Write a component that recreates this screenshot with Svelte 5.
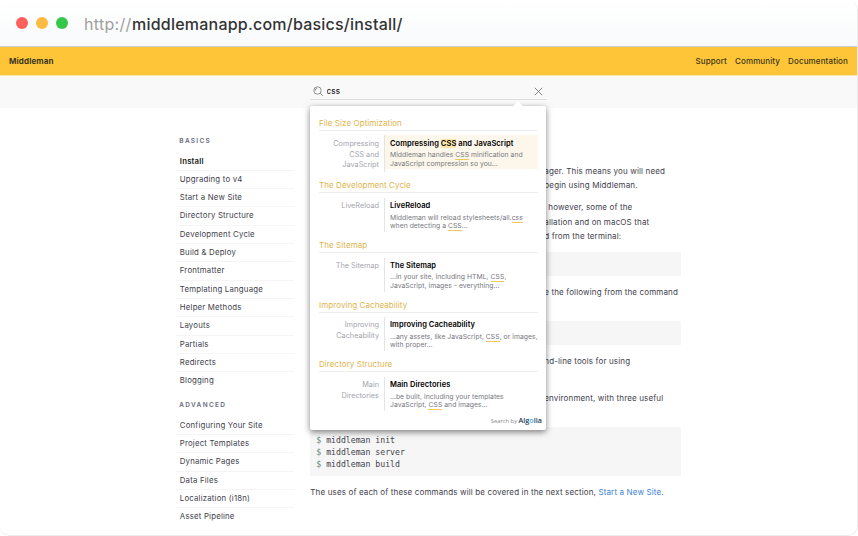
<script>
  const basics = ['Install', 'Upgrading to v4', 'Start a New Site', 'Directory Structure', 'Development Cycle', 'Build & Deploy', 'Frontmatter', 'Templating Language', 'Helper Methods', 'Layouts', 'Partials', 'Redirects', 'Blogging'];
  const advanced = ['Configuring Your Site', 'Project Templates', 'Dynamic Pages', 'Data Files', 'Localization (i18n)', 'Asset Pipeline'];
  const groups = [
    { name: 'File Size Optimization', side: ['Compressing', 'CSS and', 'JavaScript'], title: ['Compressing ', 'CSS', ' and JavaScript'], lines: [['Middleman handles ', 'CSS', ' minification and'], ['JavaScript compression so you…']], active: true },
    { name: 'The Development Cycle', side: ['LiveReload'], title: ['LiveReload'], lines: [['Middleman will reload stylesheets/all.', 'css'], ['when detecting a ', 'CSS', '…']] },
    { name: 'The Sitemap', side: ['The Sitemap'], title: ['The Sitemap'], lines: [['…in your site, including HTML, ', 'CSS', ','], ['JavaScript, images - everything…']] },
    { name: 'Improving Cacheability', side: ['Improving', 'Cacheability'], title: ['Improving Cacheability'], lines: [['…any assets, like JavaScript, ', 'CSS', ', or images,'], ['with proper…']] },
    { name: 'Directory Structure', side: ['Main', 'Directories'], title: ['Main Directories'], lines: [['…be built, including your templates'], ['JavaScript, ', 'CSS', ' and images…']] }
  ];
  let query = $state('css');
</script>

<div class="window">
  <header class="chrome">
    <i class="dot red"></i><i class="dot amber"></i><i class="dot green"></i>
    <div class="url"><span class="scheme">http://</span><span class="host">middlemanapp.com/basics/install/</span></div>
  </header>
  <nav class="topbar">
    <b>Middleman</b>
    <div class="links"><span>Support</span><span>Community</span><span>Documentation</span></div>
  </nav>
  <div class="searchbar">
    <div class="search">
      <svg width="11" height="11" viewBox="0 0 11 11" fill="none" stroke="#777" stroke-width=".8"><circle cx="4.5" cy="4.5" r="3.7" /><path d="M7.2 7.2 9.9 9.9M2.2 4.7A2.4 2.4 0 0 1 4.3 2.2" /></svg>
      <input bind:value={query} aria-label="Search" />
      <svg class="clear" width="9" height="9" viewBox="0 0 9 9" fill="none" stroke="#666" stroke-width=".8"><path d="M.8 .8 8.2 8.2M8.2 .8 .8 8.2" /></svg>
      <div class="popup">
        {#each groups as g}
          <section>
            <h3>{g.name}</h3>
            <div class="result">
              <div class="side">{#each g.side as s}<div>{s}</div>{/each}</div>
              <div class="hit" class:active={g.active}>
                <h4>{#each g.title as t, i}{#if i % 2}<mark>{t}</mark>{:else}{t}{/if}{/each}</h4>
                {#each g.lines as line}
                  <p>{#each line as t, i}{#if i % 2}<u>{t}</u>{:else}{t}{/if}{/each}</p>
                {/each}
              </div>
            </div>
          </section>
        {/each}
        <footer>Search by <strong>Alg<em>o</em>lia</strong></footer>
      </div>
    </div>
  </div>
  <div class="body">
    <aside>
      <h2>BASICS</h2>
      <ul>{#each basics as item, i}<li class:current={i === 0}>{item}</li>{/each}</ul>
      <h2 class="second">ADVANCED</h2>
      <ul>{#each advanced as item}<li>{item}</li>{/each}</ul>
    </aside>
    <main>
      <div class="para first"><div>ager. This means you will need</div><div>begin using Middleman.</div></div>
      <div class="para three"><div class="in">however, some of the</div><div>allation and on macOS that</div><div>d from the terminal:</div></div>
      <div class="box"></div>
      <div class="para cmd"><div>e the following from the command</div></div>
      <div class="box low"></div>
      <div class="para tools"><div>nd-line tools for using</div></div>
      <div class="para env"><div>environment, with three useful</div></div>
      <pre><span>$</span> middleman init
<span>$</span> middleman server
<span>$</span> middleman build</pre>
      <p class="last">The uses of each of these commands will be covered in the next section, <a href="#new">Start a New Site</a>.</p>
    </main>
  </div>
</div>

<style>
  :global(body) { background: #fff; }
  * { box-sizing: border-box; }
  h2, h3, h4, p, ul, pre { margin: 0; padding: 0; }
  .window { width: 858px; height: 536px; overflow: hidden; background: #fff; border: solid #ececec; border-width: 0 1px 1px 0; border-radius: 10px; font-family: Inter, "Liberation Sans", sans-serif; color: #42424c; display: flex; flex-direction: column; }
  .chrome { height: 47px; flex: none; margin-right: -1px; display: flex; align-items: center; border-bottom: 1px solid #c9ced3; background: linear-gradient(#fff, #f8fafb); padding: 0 0 0 15.5px; }
  .dot { width: 12.5px; height: 12.5px; border-radius: 50%; margin-right: 7.7px; }
  .red { background: #ff605c; } .amber { background: #ffba41; } .green { background: #34c749; }
  .url { font-size: 16px; margin-left: 8px; white-space: nowrap; padding-top: 1px; display: flex; }
  .scheme { color: #a0a0a0; width: 48px; letter-spacing: .3px; }
  .host { color: #333; font-weight: 500; letter-spacing: .22px; }
  .topbar { height: 28.5px; flex: none; background: #fdc537; border-bottom: 1px solid #fde6a8; display: flex; justify-content: space-between; align-items: center; padding: 0 9px; font-size: 8px; letter-spacing: .12px; color: #3c3520; }
  .links { display: flex; gap: 8px; font-weight: 500; }
  .searchbar { height: 32.5px; flex: none; background: #f9f9f9; padding-left: 310px; }
  .search { position: relative; width: 237px; height: 24px; border-bottom: 1px solid #dcdcdc; display: flex; align-items: center; padding: 8px 4px 0 3px; }
  input { flex: 1; min-width: 0; border: 0; padding: 0 0 0 2.5px; background: none; outline: 0; font: 500 8px Inter, sans-serif; color: #222; letter-spacing: .1px; }
  .popup { position: absolute; z-index: 2; left: .4px; top: 30.9px; width: 236px; height: 324px; background: #fff; border-radius: 2px; box-shadow: 0 2px 6px rgba(0,0,0,.5); padding: 10.6px 8.5px 0 8.6px; }
  .popup::before { content: ''; position: absolute; left: 204px; top: -3.5px; width: 8px; height: 8px; transform: rotate(45deg); background: #fff; }
  section { height: 59.55px; }
  section:first-child { height: 62.5px; }
  h3 { height: 14px; line-height: 13px; border-bottom: 1px solid #ededed; font-size: 8px; font-weight: 400; color: #e0b44d; letter-spacing: .07px; }
  .result { display: flex; padding-top: 4.5px; }
  .side { flex: none; width: 66px; min-height: 34px; padding: 3.4px 5px 0 0; border-right: 1px solid #e4e4e4; text-align: right; font-size: 7.3px; line-height: 10.75px; color: #a4a4ac; letter-spacing: 0; }
  section:first-child .side { height: 37px; }
  .hit { flex: 1; min-width: 0; height: 34px; padding: 3.4px 0 0 5px; white-space: nowrap; }
  .hit.active { background: #fcf7ea; }
  h4 { font-size: 7.5px; line-height: 10px; font-weight: 600; color: #000; margin-bottom: 2.5px; letter-spacing: .06px; }
  mark { background: #fde6a8; color: inherit; }
  .hit p { font-size: 6.8px; line-height: 8.2px; color: #777780; letter-spacing: .04px; }
  u { text-decoration: none; box-shadow: 0 1px 0 #f0c85c; }
  footer { text-align: right; font: 5.8px/8px "Open Sans", sans-serif; color: #888; margin: -1.5px -4px 0 0; white-space: nowrap; }
  footer strong { font-size: 7.2px; color: #23405d; font-weight: 600; }
  em { font-style: normal; color: #46aee9; }
  .body { flex: 1; display: flex; align-items: flex-start; padding-left: 176px; }
  aside { width: 118px; margin-right: 16.3px; padding-top: 27px; font-size: 7.8px; letter-spacing: .2px; }
  h2 { font-size: 6.5px; line-height: 12px; height: 12px; font-weight: 600; letter-spacing: 1.3px; color: #686a80; padding-left: 3.3px; margin-bottom: 5.5px; }
  .second { margin-top: 8.7px; }
  ul { list-style: none; }
  li { height: 18.32px; line-height: 17.5px; padding-left: 3.8px; border-bottom: 1px solid #f5f5f5; }
  li:last-child { border-bottom: 0; }
  .current { font-weight: 600; color: #222; }
  main { width: 370.7px; font-size: 8px; letter-spacing: .14px; line-height: 14.2px; white-space: nowrap; }
  .para { padding-left: 234px; }
  .first { padding-top: 56px; }
  .three { margin-top: 8px; }
  .in { padding-left: 4px; }
  .box { height: 24px; background: #f6f6f6; margin-top: 8.7px; }
  .cmd { margin-top: 9px; }
  .low { margin-top: 22px; }
  .tools { margin-top: 9px; }
  .env { margin-top: 22.5px; }
  pre { height: 49px; margin-top: 22.5px; padding: 6.5px 6px; background: #f6f6f6; font: 8.2px/12.2px "DejaVu Sans Mono", monospace; letter-spacing: -.01px; }
  pre span { color: #5d8580; }
  .last { margin-top: 8.5px; }
  a { color: #3e83d5; text-decoration: none; }
</style>
